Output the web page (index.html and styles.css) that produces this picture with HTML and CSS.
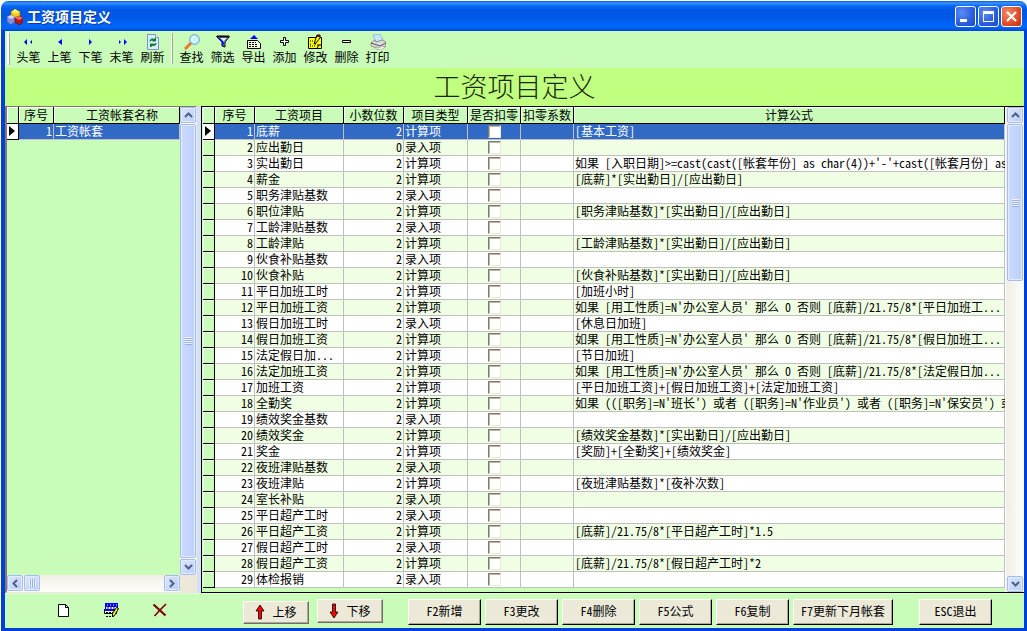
FILE: index.html
```html
<!DOCTYPE html>
<html lang="zh-CN">
<head>
<meta charset="utf-8">
<title>工资项目定义</title>
<link rel="stylesheet" href="styles.css">
</head>
<body>
<svg class="defs" aria-hidden="true">
  <symbol id="up" viewBox="0 0 9 6"><path d="M1 5l3.500-3.500L8 5" fill="none" stroke="#4d6185" stroke-width="2"/></symbol>
  <symbol id="down" viewBox="0 0 9 6"><path d="M1 1l3.500 3.500L8 1" fill="none" stroke="#4d6185" stroke-width="2"/></symbol>
  <symbol id="left" viewBox="0 0 6 9"><path d="M5 1L1.500 4.500L5 8" fill="none" stroke="#4d6185" stroke-width="2"/></symbol>
  <symbol id="right" viewBox="0 0 6 9"><path d="M1 1l3.500 3.500L1 8" fill="none" stroke="#4d6185" stroke-width="2"/></symbol>
</svg>
<div class="window">
  <header class="titlebar">
    <svg class="app-icon" viewBox="0 0 16 16">
      <path d="M4 3l4-3 5 3v5L9 10 4 8z" fill="#ffc800" stroke="#8a5a00" stroke-width=".6"/>
      <path d="M4 3l4-3 5 3-4 2z" fill="#ffee60"/>
      <path d="M0 8l4-2 4 2v5l-4 3-4-3z" fill="#8a8ad8" stroke="#4a4a88" stroke-width=".6"/>
      <path d="M0 8l4-2 4 2-4 2z" fill="#d4d4ff"/>
      <path d="M8 9l4-2 4 2v4l-4 3-4-3z" fill="#b01818" stroke="#600" stroke-width=".6"/>
      <path d="M8 9l4-2 4 2-4 2z" fill="#ee7060"/>
    </svg>
    <span class="caption">工资项目定义</span>
    <div class="win-buttons">
      <button class="win-btn" aria-label="最小化"><svg viewBox="0 0 19 19"><path d="M4 12h7v3H4z" fill="#fff"/></svg></button>
      <button class="win-btn" aria-label="最大化"><svg viewBox="0 0 19 19"><path d="M4 4h11v11H4zM5 7v7h9V7z" fill="#fff" fill-rule="evenodd"/></svg></button>
      <button class="win-btn close" aria-label="关闭"><svg viewBox="0 0 19 19"><path d="M5 5l9 9M14 5l-9 9" stroke="#fff" stroke-width="2.200"/></svg></button>
    </div>
  </header>

  <div class="client">
    <nav class="toolbar">
      <span class="handle"></span>
      <button class="tool"><svg viewBox="0 0 16 16"><path d="M6 5v6L3 8zM11 6v4L9 8z" fill="#00f"/></svg>头笔</button>
      <button class="tool"><svg viewBox="0 0 16 16"><path d="M10 5v6L6 8z" fill="#00f"/></svg>上笔</button>
      <button class="tool"><svg viewBox="0 0 16 16"><path d="M6 5v6l3-3z" fill="#00f"/></svg>下笔</button>
      <button class="tool"><svg viewBox="0 0 16 16"><path d="M10 5v6l3-3zM5 6v4l2-2z" fill="#00f"/></svg>末笔</button>
      <button class="tool"><svg viewBox="0 0 16 16"><path d="M2.500 .5h8l3 3v12h-11z" fill="#d8ecff" stroke="#7898c8"/><path d="M10.500 .5v3h3" fill="#fff" stroke="#7898c8"/><path d="M5 7.500c0-3 3-3 4-2M10.500 4v3H7.500zM11 9c0 3-3 3-4 2M5.500 13v-3h3z" fill="#087828" stroke="#087828"/></svg>刷新</button>
      <span class="sep"></span>
      <button class="tool"><svg viewBox="0 0 16 16"><path d="M1 15l6-6" stroke="#e87828" stroke-width="3"/><circle cx="10.500" cy="5.500" r="4.800" fill="#c8f4ff" stroke="#6890d8"/><path d="M8 5c0-2 2-3 3-3" stroke="#fff" fill="none"/></svg>查找</button>
      <button class="tool"><svg viewBox="0 0 16 16"><path d="M1.500 2.500h13L10 8v5l-3-1V8z" fill="#8ca0c8" stroke="#000"/><path d="M2 2.500h12" stroke="#000" stroke-width="2"/><path d="M4 4.500l4 4v3" stroke="#00f" stroke-width="1.500" fill="none"/><path d="M6 4h5L8.500 7z" fill="#fff"/></svg>筛选</button>
      <button class="tool"><svg viewBox="0 0 16 16"><path d="M8 1l4 4H4z" fill="#00f"/><path d="M1.500 6.500h10l3 3v5h-13z" fill="#f8ffdc" stroke="#000"/><path d="M3 8.500h7M3 10.500h9M3 12.500h9" stroke="#000" stroke-dasharray="2 1"/></svg>导出</button>
      <button class="tool"><svg viewBox="0 0 16 16"><path d="M6.500 3.500h2v3h3v2h-3v3h-2v-3h-3v-2h3z" fill="#fff" stroke="#000"/></svg>添加</button>
      <button class="tool"><svg viewBox="0 0 16 16"><path d="M.5 3.500h13v11H.5z" fill="#ff0" stroke="#000"/><path d="M2 7h3M2 10h2M7 10h2M2 12h5" stroke="#000" stroke-dasharray="1 1"/><path d="M9 1h3v3l-4 5-2 1 1-3z" fill="#ff0" stroke="#000"/><path d="M9 1h3v2H9z" fill="#700"/><path d="M9 11h4M9 14l2-3" stroke="#000"/></svg>修改</button>
      <button class="tool"><svg viewBox="0 0 16 16"><path d="M3.500 6.500h8v2h-8z" fill="#fff" stroke="#000"/></svg>删除</button>
      <button class="tool"><svg viewBox="0 0 16 16"><path d="M3 1l7-1 3 6-7 3z" fill="#c8e8ff" stroke="#80a8e0" stroke-width=".7"/><path d="M1 9l4-3 1 2 6-2 4 2v4l-6 3-9-3z" fill="#dcdcd8" stroke="#707070" stroke-width=".7"/><path d="M1 9l9 3 6-3" fill="none" stroke="#555"/><path d="M5 13l4 1 3-2 3 1-4 3-5-1z" fill="#fff" stroke="#888" stroke-width=".6"/></svg>打印</button>
    </nav>
    <h1 class="banner">工资项目定义</h1>

    <main class="panes">
      <section class="side">
        <div class="side-top">
          <div class="side-table">
            <table class="grid">
              <colgroup><col class="w-mark"><col class="w-no-s"><col></colgroup>
              <thead><tr><th></th><th>序号</th><th class="name">工资帐套名称</th></tr></thead>
              <tbody><tr class="current"><td class="mark"></td><td class="num">1</td><td>工资帐套</td></tr></tbody>
            </table>
          </div>
          <div class="vscroll">
            <button aria-label="向上"><svg class="v"><use href="#up"/></svg></button>
            <div class="thumb fill"></div>
            <button aria-label="向下"><svg class="v"><use href="#down"/></svg></button>
          </div>
        </div>
        <div class="hscroll">
          <button aria-label="向左"><svg class="h"><use href="#left"/></svg></button>
          <div class="thumb"></div>
          <span class="spacer"></span>
          <button aria-label="向右"><svg class="h"><use href="#right"/></svg></button>
        </div>
      </section>
      <section class="detail">
        <div class="detail-table">
          <table class="grid striped">
            <colgroup><col class="w-mark"><col class="w-no"><col class="w-item"><col class="w-dec"><col class="w-type"><col class="w-flag"><col class="w-flag"><col></colgroup>
            <thead><tr><th></th><th>序号</th><th>工资项目</th><th>小数位数</th><th>项目类型</th><th>是否扣零</th><th>扣零系数</th><th>计算公式</th></tr></thead>
            <tbody>
<tr class="current"><td class="mark"></td><td class="num">1</td><td>底薪</td><td class="num">2</td><td>计算项</td><td class="chk"><input type="checkbox" aria-label="是否扣零"></td><td></td><td>[基本工资]</td></tr>
<tr><td class="mark"></td><td class="num">2</td><td>应出勤日</td><td class="num">0</td><td>录入项</td><td class="chk"><input type="checkbox" aria-label="是否扣零"></td><td></td><td></td></tr>
<tr><td class="mark"></td><td class="num">3</td><td>实出勤日</td><td class="num">2</td><td>计算项</td><td class="chk"><input type="checkbox" aria-label="是否扣零"></td><td></td><td>如果 [入职日期]&gt;=cast(cast([帐套年份] as char(4))+'-'+cast([帐套月份] as</td></tr>
<tr><td class="mark"></td><td class="num">4</td><td>薪金</td><td class="num">2</td><td>计算项</td><td class="chk"><input type="checkbox" aria-label="是否扣零"></td><td></td><td>[底薪]*[实出勤日]/[应出勤日]</td></tr>
<tr><td class="mark"></td><td class="num">5</td><td>职务津贴基数</td><td class="num">2</td><td>录入项</td><td class="chk"><input type="checkbox" aria-label="是否扣零"></td><td></td><td></td></tr>
<tr><td class="mark"></td><td class="num">6</td><td>职位津贴</td><td class="num">2</td><td>计算项</td><td class="chk"><input type="checkbox" aria-label="是否扣零"></td><td></td><td>[职务津贴基数]*[实出勤日]/[应出勤日]</td></tr>
<tr><td class="mark"></td><td class="num">7</td><td>工龄津贴基数</td><td class="num">2</td><td>录入项</td><td class="chk"><input type="checkbox" aria-label="是否扣零"></td><td></td><td></td></tr>
<tr><td class="mark"></td><td class="num">8</td><td>工龄津贴</td><td class="num">2</td><td>计算项</td><td class="chk"><input type="checkbox" aria-label="是否扣零"></td><td></td><td>[工龄津贴基数]*[实出勤日]/[应出勤日]</td></tr>
<tr><td class="mark"></td><td class="num">9</td><td>伙食补贴基数</td><td class="num">2</td><td>录入项</td><td class="chk"><input type="checkbox" aria-label="是否扣零"></td><td></td><td></td></tr>
<tr><td class="mark"></td><td class="num">10</td><td>伙食补贴</td><td class="num">2</td><td>计算项</td><td class="chk"><input type="checkbox" aria-label="是否扣零"></td><td></td><td>[伙食补贴基数]*[实出勤日]/[应出勤日]</td></tr>
<tr><td class="mark"></td><td class="num">11</td><td>平日加班工时</td><td class="num">2</td><td>计算项</td><td class="chk"><input type="checkbox" aria-label="是否扣零"></td><td></td><td>[加班小时]</td></tr>
<tr><td class="mark"></td><td class="num">12</td><td>平日加班工资</td><td class="num">2</td><td>计算项</td><td class="chk"><input type="checkbox" aria-label="是否扣零"></td><td></td><td>如果 [用工性质]=N'办公室人员' 那么 0 否则 [底薪]/21.75/8*[平日加班工...</td></tr>
<tr><td class="mark"></td><td class="num">13</td><td>假日加班工时</td><td class="num">2</td><td>录入项</td><td class="chk"><input type="checkbox" aria-label="是否扣零"></td><td></td><td>[休息日加班]</td></tr>
<tr><td class="mark"></td><td class="num">14</td><td>假日加班工资</td><td class="num">2</td><td>计算项</td><td class="chk"><input type="checkbox" aria-label="是否扣零"></td><td></td><td>如果 [用工性质]=N'办公室人员' 那么 0 否则 [底薪]/21.75/8*[假日加班工...</td></tr>
<tr><td class="mark"></td><td class="num">15</td><td>法定假日加...</td><td class="num">2</td><td>计算项</td><td class="chk"><input type="checkbox" aria-label="是否扣零"></td><td></td><td>[节日加班]</td></tr>
<tr><td class="mark"></td><td class="num">16</td><td>法定加班工资</td><td class="num">2</td><td>计算项</td><td class="chk"><input type="checkbox" aria-label="是否扣零"></td><td></td><td>如果 [用工性质]=N'办公室人员' 那么 0 否则 [底薪]/21.75/8*[法定假日加...</td></tr>
<tr><td class="mark"></td><td class="num">17</td><td>加班工资</td><td class="num">2</td><td>计算项</td><td class="chk"><input type="checkbox" aria-label="是否扣零"></td><td></td><td>[平日加班工资]+[假日加班工资]+[法定加班工资]</td></tr>
<tr><td class="mark"></td><td class="num">18</td><td>全勤奖</td><td class="num">2</td><td>计算项</td><td class="chk"><input type="checkbox" aria-label="是否扣零"></td><td></td><td>如果 (([职务]=N'班长') 或者 ([职务]=N'作业员') 或者 ([职务]=N'保安员') 或</td></tr>
<tr><td class="mark"></td><td class="num">19</td><td>绩效奖金基数</td><td class="num">2</td><td>录入项</td><td class="chk"><input type="checkbox" aria-label="是否扣零"></td><td></td><td></td></tr>
<tr><td class="mark"></td><td class="num">20</td><td>绩效奖金</td><td class="num">2</td><td>计算项</td><td class="chk"><input type="checkbox" aria-label="是否扣零"></td><td></td><td>[绩效奖金基数]*[实出勤日]/[应出勤日]</td></tr>
<tr><td class="mark"></td><td class="num">21</td><td>奖金</td><td class="num">2</td><td>计算项</td><td class="chk"><input type="checkbox" aria-label="是否扣零"></td><td></td><td>[奖励]+[全勤奖]+[绩效奖金]</td></tr>
<tr><td class="mark"></td><td class="num">22</td><td>夜班津贴基数</td><td class="num">2</td><td>录入项</td><td class="chk"><input type="checkbox" aria-label="是否扣零"></td><td></td><td></td></tr>
<tr><td class="mark"></td><td class="num">23</td><td>夜班津贴</td><td class="num">2</td><td>计算项</td><td class="chk"><input type="checkbox" aria-label="是否扣零"></td><td></td><td>[夜班津贴基数]*[夜补次数]</td></tr>
<tr><td class="mark"></td><td class="num">24</td><td>室长补贴</td><td class="num">2</td><td>录入项</td><td class="chk"><input type="checkbox" aria-label="是否扣零"></td><td></td><td></td></tr>
<tr><td class="mark"></td><td class="num">25</td><td>平日超产工时</td><td class="num">2</td><td>录入项</td><td class="chk"><input type="checkbox" aria-label="是否扣零"></td><td></td><td></td></tr>
<tr><td class="mark"></td><td class="num">26</td><td>平日超产工资</td><td class="num">2</td><td>计算项</td><td class="chk"><input type="checkbox" aria-label="是否扣零"></td><td></td><td>[底薪]/21.75/8*[平日超产工时]*1.5</td></tr>
<tr><td class="mark"></td><td class="num">27</td><td>假日超产工时</td><td class="num">2</td><td>录入项</td><td class="chk"><input type="checkbox" aria-label="是否扣零"></td><td></td><td></td></tr>
<tr><td class="mark"></td><td class="num">28</td><td>假日超产工资</td><td class="num">2</td><td>计算项</td><td class="chk"><input type="checkbox" aria-label="是否扣零"></td><td></td><td>[底薪]/21.75/8*[假日超产工时]*2</td></tr>
<tr><td class="mark"></td><td class="num">29</td><td>体检报销</td><td class="num">2</td><td>录入项</td><td class="chk"><input type="checkbox" aria-label="是否扣零"></td><td></td><td></td></tr>
            </tbody>
          </table>
        </div>
        <div class="vscroll">
          <button aria-label="向上"><svg class="v"><use href="#up"/></svg></button>
          <div class="thumb part"></div>
          <span class="spacer"></span>
          <button aria-label="向下"><svg class="v"><use href="#down"/></svg></button>
        </div>
      </section>
    </main>

    <footer class="actions">
      <div class="icon-set">
        <button class="icon-btn" aria-label="新建"><svg viewBox="0 0 16 16"><path d="M2.500 2.500h7l3 3v9h-10z" fill="#fff" stroke="#000"/><path d="M9.500 2.500v3h3" fill="none" stroke="#000"/></svg></button>
        <button class="icon-btn" aria-label="编辑"><svg viewBox="0 0 16 16"><path d="M1.500 4.500h12v4h-12zM.5 8.500h12v3H.5z" fill="#fff" stroke="#000"/><path d="M1 1h13v4H1zM0 7h12v2H0z" fill="#00f"/><path d="M3 3h10" stroke="#fff" stroke-dasharray="1 2"/><path d="M3 6h8M2 10.500h7M2 14.500h8" stroke="#000" stroke-dasharray="2 1"/><path d="M12.500 5.500l2 1-4 7-2 1v-3z" fill="#ff0" stroke="#000"/></svg></button>
        <button class="icon-btn" aria-label="删除"><svg viewBox="0 0 16 16"><path d="M1.500 2.500l12 11" stroke="#800000" stroke-width="2.200"/><path d="M14 2L8 8l-5.500 6" stroke="#800000" stroke-width="1.600" fill="none"/></svg></button>
      </div>
      <div class="move-set">
        <button class="btn soft"><svg viewBox="0 0 10 16"><path d="M5 1l4 6H6.500v8h-3V7H1z" fill="#f00" stroke="#000" stroke-width=".8"/></svg>上移</button>
        <button class="btn soft"><svg viewBox="0 0 10 16"><path d="M5 15L1 9h2.500V1h3v8H9z" fill="#f00" stroke="#000" stroke-width=".8"/></svg>下移</button>
      </div>
      <div class="key-set">
        <button class="btn">F2新增</button>
        <button class="btn">F3更改</button>
        <button class="btn">F4删除</button>
        <button class="btn">F5公式</button>
        <button class="btn">F6复制</button>
        <button class="btn wide">F7更新下月帐套</button>
      </div>
      <button class="btn">ESC退出</button>
    </footer>
  </div>
</div>
</body>
</html>
```
FILE: styles.css
```css
* { box-sizing: border-box; }
html, body { height: 100%; }
body {
  margin: 0;
  background: #fff;
  color: #000;
  font: 12px/14px "Noto Sans Mono CJK SC", "Noto Sans CJK SC", monospace;
  font-feature-settings: "hwid";
}
button, input { font: inherit; font-feature-settings: inherit; color: inherit; margin: 0; padding: 0; }
button { border: 0; background: none; }
.defs { display: none; }
svg { display: block; }

.window {
  display: flex;
  flex-direction: column;
  min-height: 100%;
  padding: 1px 0 0 1px;
}
.titlebar {
  display: flex;
  align-items: center;
  height: 30px;
  padding: 1px 5px 0 6px;
  gap: 4px;
  border-radius: 7px 7px 0 0;
  background: linear-gradient(#0a58d8 0, #3c94ff 2px, #0668f4 5px, #0058e4 9px, #0058e6 16px, #0066fc 24px, #0064f6 27px, #0044c8 30px);
}
.app-icon { width: 16px; height: 16px; }
.caption { flex: 1; padding-bottom: 1px; color: #fff; font-size: 14px; font-weight: 700; line-height: 18px; text-shadow: 1px 1px #0a3a9a; }
.win-buttons { display: flex; gap: 2px; }
.win-btn {
  width: 21px;
  height: 21px;
  border: 1px solid #fff;
  border-radius: 3px;
  background: radial-gradient(circle at 30% 30%, #5c8cf4, #2a5ce0 60%, #1c48c0);
}
.win-btn.close { background: radial-gradient(circle at 30% 30%, #f08868, #e04c28 60%, #b83010); }
.win-btn svg { width: 19px; height: 19px; }

.client {
  flex: 1;
  display: flex;
  flex-direction: column;
  border: solid #0040d8;
  border-width: 0 3px 3px 4px;
  background: #c8fcb8;
}
.toolbar { display: flex; height: 37px; padding: 2px; }
.handle, .sep { flex: none; border: solid #a8a898; border-width: 0 1px 0 0; background: #fff; }
.handle { width: 3px; height: 32px; margin-right: 3px; }
.sep { width: 2px; height: 31px; margin: 0 3px; }
.tool { display: flex; flex-direction: column; align-items: center; width: 31px; height: 34px; white-space: nowrap; }
.tool svg { width: 16px; height: 16px; margin-top: 1px; }

.banner {
  margin: 0;
  height: 38px;
  background: #c0ff80;
  color: #182808;
  font-size: 27px;
  font-weight: 300;
  font-family: "Noto Sans CJK SC Light", "Noto Sans CJK SC", sans-serif;
  line-height: 35px;
  text-align: center;
}

.panes { flex: 1; display: flex; gap: 4px; background: #d0e2fa; }
.side {
  flex: none;
  width: 192px;
  display: flex;
  flex-direction: column;
  border: solid #ece9d8;
  border-width: 1px 1px 1px 2px;
  border-top-color: #807c70;
  border-left-color: #807c70;
  background: #ece9d8;
}
.side-top { flex: 1; display: flex; }
.side-table { flex: 1; background: #c8fcb8; min-width: 0; }
.detail {
  flex: 1;
  min-width: 0;
  display: flex;
  border: 1px solid #000;
  border-right: 0;
}
.detail-table { flex: 1; min-width: 0; padding-left: 1px; padding-bottom: 4px; overflow-x: clip; background: #c8fcb8; }
.detail .vscroll { width: 19px; padding: 0 2px 0 1px; border-left: 1px solid #fff; }

.grid { width: 100%; table-layout: fixed; border-collapse: separate; border-spacing: 0; }
.w-mark { width: 12px; }
.w-no-s { width: 35px; }
.w-no { width: 40px; }
.w-item { width: 89px; }
.w-dec { width: 60px; }
.w-type { width: 64px; }
.w-flag { width: 53px; }
.grid th, .grid td { height: 16px; padding: 0 1px 1px; white-space: nowrap; }
.grid th {
  height: 17px;
  border: solid #000;
  border-width: 0 1px 1px 0;
  background: #c8fcb8;
  box-shadow: inset 1px 1px #fff;
  font-weight: 400;
  text-align: center;
}
.grid th.name { padding-left: 12px; }
.grid td { border: solid #c0c0c0; border-width: 0 1px 1px 0; background: #fff; text-align: left; }
.striped tr:nth-child(even) td { background: #f0ffe4; }
.grid tr td.mark { border-color: #000; background: #c8fcb8; box-shadow: inset 1px 1px #fff; }
.grid td.num { text-align: right; }
.grid .current td { background: #316ac5; color: #fff; }
.grid tr.current td.mark { background: #fff; }
.current .mark::before {
  content: "";
  display: block;
  width: 6px;
  margin-left: 1px;
  border: solid transparent;
  border-width: 5px 0 5px 6px;
  border-left-color: #000;
}
.grid td.chk { text-align: center; line-height: 0; }
.chk input {
  appearance: none;
  width: 13px;
  height: 13px;
  border: 1px solid;
  border-color: #807c70 #ece9d8 #ece9d8 #807c70;
  box-shadow: inset 1px 1px #b8b4a4;
  background: #fff;
  vertical-align: middle;
}

.vscroll, .hscroll { flex: none; display: flex; background: linear-gradient(90deg, #f0eee6, #fefefb); }
.vscroll { flex-direction: column; width: 16px; gap: 1px; }
.hscroll { height: 17px; margin-right: 16px; gap: 1px; background: linear-gradient(#f0eee6, #fefefb); }
.vscroll button, .hscroll button, .thumb {
  flex: none;
  display: grid;
  place-items: center;
  width: 16px;
  height: 16px;
  border: 1px solid #a4bcf0;
  border-radius: 2px;
  background: linear-gradient(135deg, #dce6ff, #b8ccf8);
  box-shadow: inset 0 0 0 1px #e4ecff;
}
.thumb.fill { flex: 1; }
.thumb.part { height: 157px; }
.vscroll .thumb { background: linear-gradient(90deg, #ccdaff, #bccffa); }
.thumb::before {
  content: "";
  width: 7px;
  height: 8px;
  background: repeating-linear-gradient(#f0f5ff 0 1px, #94b0f0 1px 2px);
}
.hscroll .thumb::before { background: repeating-linear-gradient(90deg, #f0f5ff 0 1px, #94b0f0 1px 2px); }
.spacer { flex: 1; }
svg.v { width: 9px; height: 6px; }
svg.h { width: 6px; height: 9px; }

.actions {
  display: flex;
  align-items: flex-start;
  height: 35px;
  padding: 5px 32px 0 51px;
  border-top: 1px solid #e4f8dc;
}
.icon-set { display: flex; gap: 32px; padding-top: 3px; }
.icon-btn svg { width: 16px; height: 16px; }
.move-set { display: flex; gap: 8px; margin-left: 75px; }
.key-set { display: flex; gap: 4px; margin-left: 25px; margin-right: auto; }
.btn {
  width: 73px;
  height: 26px;
  padding-bottom: 2px;
  border: 1px solid;
  border-color: #fff #000 #000 #fff;
  background: #ece9d8;
  box-shadow: inset -1px -1px #aca899;
  white-space: nowrap;
}
.btn.wide { width: 100px; }
.btn.soft {
  display: flex;
  align-items: center;
  justify-content: center;
  gap: 7px;
  width: 66px;
  height: 24px;
  padding: 0 0 1px;
  border-color: #fff #716f64 #716f64 #fff;
}
.btn.soft:first-child { height: 23px; margin-top: 2px; }
.btn.soft svg { width: 10px; height: 16px; }
```
